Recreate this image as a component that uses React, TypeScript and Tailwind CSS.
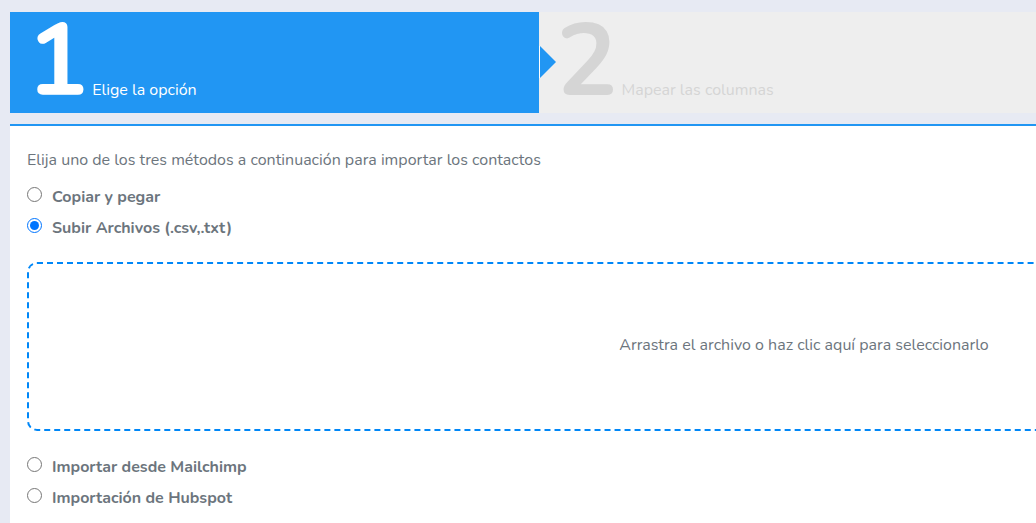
import { useState } from "react";

const steps = [
  { number: "1", title: "Elige la opción" },
  { number: "2", title: "Mapear las columnas" },
];

type MethodProps = {
  id: string;
  label: string;
  selected: string;
  onSelect: (id: string) => void;
};

const Method = ({ id, label, selected, onSelect }: MethodProps) => (
  <div className="flex h-[31px] items-start">
    <input
      id={id}
      type="radio"
      name="method"
      checked={selected === id}
      onChange={() => onSelect(id)}
      className="mt-[2px] size-[15px] shrink-0 accent-[#0075ff]"
    />
    <label htmlFor={id} className="pl-[10px] font-bold">
      {label}
    </label>
  </div>
);

const App = () => {
  const [method, setMethod] = useState("upload");
  const [current] = useState("1");

  return (
    <div className="min-h-screen overflow-hidden bg-[#e7eaf3] pt-3 pl-[10px] font-['Nunito',Lato,sans-serif] text-[16px] leading-[24px] text-[#6c757d]">
      <div className="min-w-[1588px]">
        {/* Steps */}
        <ol className="grid grid-cols-3">
          {steps.map((step) => (
            <li
              key={step.number}
              className={
                step.number === current
                  ? "relative flex items-baseline gap-1 bg-[#2196f3] px-[17px] pb-[2px] text-white"
                  : "relative flex items-baseline gap-1 bg-[#eeeeee] px-[17px] pb-[2px] text-[#d5d5d5]"
              }
            >
              <span className="text-[102px] leading-[99px] font-bold">
                {step.number}
              </span>
              <span>{step.title}</span>
              {step.number === current && (
                <svg
                  className="absolute top-[34px] left-full z-10 h-8 w-[17px]"
                  viewBox="0 0 17 32"
                  aria-hidden="true"
                >
                  <path d="M0 0h1v32H0z" fill="#ffffff" />
                  <path d="M1 0l16 16L1 32z" fill="#2196f3" />
                </svg>
              )}
            </li>
          ))}
        </ol>

        {/* Import method */}
        <main className="mt-[11px] min-h-[400px] border-t-2 border-[#2196f3] bg-white px-[17px] pt-[22px]">
          <p className="pb-[13px]">
            Elija uno de los tres métodos a continuación para importar los
            contactos
          </p>
          <Method
            id="paste"
            label="Copiar y pegar"
            selected={method}
            onSelect={setMethod}
          />
          <Method
            id="upload"
            label="Subir Archivos (.csv,.txt)"
            selected={method}
            onSelect={setMethod}
          />

          <button
            type="button"
            className="mt-[15px] mb-6 block h-[169px] w-full rounded-[10px] border-2 border-dashed border-[#0087f7] pb-1"
          >
            Arrastra el archivo o haz clic aquí para seleccionarlo
          </button>

          <Method
            id="mailchimp"
            label="Importar desde Mailchimp"
            selected={method}
            onSelect={setMethod}
          />
          <Method
            id="hubspot"
            label="Importación de Hubspot"
            selected={method}
            onSelect={setMethod}
          />
        </main>
      </div>
    </div>
  );
};

export default App;
